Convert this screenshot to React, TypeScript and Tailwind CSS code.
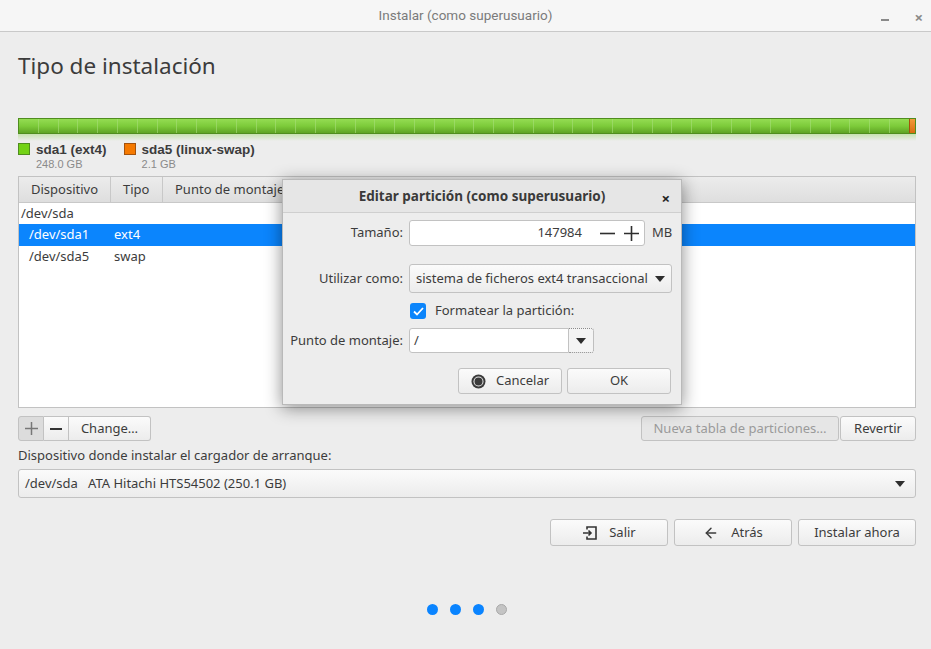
import React from 'react';
import { ArrowLeft } from 'lucide-react';

const SEGMENTS = Array.from({ length: 45 });

const btn =
  'flex items-center justify-center rounded-[3px] border border-[#c2c2c2] bg-gradient-to-b from-[#fbfbfb] to-[#ececec] text-[#3c3c3c]';

function Caret() {
  return (
    <svg width="10" height="6" viewBox="0 0 10 6">
      <path d="M0 0h10L5 6z" fill="#2e2e2e" />
    </svg>
  );
}

function Dialog() {
  return (
    <div className="absolute left-[282px] top-[179px] w-[400px] h-[226px] bg-[#ededed] border border-[#b9b9b9] shadow-[0_3px_16px_rgba(0,0,0,0.45)]">
      {/* header */}
      <div className="relative flex h-[33px] items-center justify-center border-b border-[#cfcfcf] bg-[#e6e6e6]">
        <span className="font-bold text-[13.5px] text-[#3a3a3a]">Editar partición (como superusuario)</span>
        <span className="absolute right-[11px] top-[7px] text-[15px] font-bold text-[#222]">×</span>
      </div>

      <div className="flex flex-col">
        {/* Tamaño */}
        <div className="mt-[7px] flex h-[26px] items-center">
          <div className="w-[126px] pr-[6px] text-right">Tamaño:</div>
          <div className="flex h-[26px] w-[236px] items-center rounded-[3px] border border-[#c2c2c2] bg-white">
            <span className="flex-1 pr-[13px] text-right">147984</span>
            <span className="flex w-[24px] justify-center">
              <svg width="15" height="15" viewBox="0 0 15 15"><path d="M0 7.5h15" stroke="#2e2e2e" strokeWidth="1.6" /></svg>
            </span>
            <span className="mr-[1px] flex w-[24px] justify-center">
              <svg width="15" height="15" viewBox="0 0 15 15"><path d="M0 7.5h15M7.5 0v15" stroke="#2e2e2e" strokeWidth="1.6" /></svg>
            </span>
          </div>
          <span className="ml-[7px]">MB</span>
        </div>

        {/* Utilizar como */}
        <div className="mt-[18px] flex h-[29px] items-center">
          <div className="w-[126px] pr-[6px] text-right">Utilizar como:</div>
          <div className={btn + ' h-[29px] w-[263px] !justify-between px-[6px]'}>
            <span>sistema de ficheros ext4 transaccional</span>
            <Caret />
          </div>
        </div>

        {/* checkbox */}
        <div className="mt-[10px] flex h-[16px] items-center pl-[127px]">
          <div className="flex h-[16px] w-[16px] items-center justify-center rounded-[3px] bg-[#0c85fb]">
            <svg width="11" height="9" viewBox="0 0 11 9">
              <path d="M1 4.5l3 3L10 1" stroke="white" strokeWidth="1.8" fill="none" />
            </svg>
          </div>
          <span className="ml-[9px]">Formatear la partición:</span>
        </div>

        {/* Punto de montaje */}
        <div className="mt-[9px] flex h-[25px] items-center">
          <div className="w-[126px] pr-[6px] text-right">Punto de montaje:</div>
          <div className="flex h-[25px] w-[160px] items-center rounded-l-[3px] border border-[#c2c2c2] bg-white pl-[4px]">/</div>
          <div className="flex h-[25px] w-[25px] items-center justify-center rounded-r-[3px] border border-l-0 border-dotted border-[#8a8a8a] bg-[#f4f4f4]">
            <Caret />
          </div>
        </div>

        {/* Buttons */}
        <div className="mt-[15px] flex justify-end gap-[5px] pr-[10px]">
          <div className={btn + ' h-[26px] w-[104px] gap-[10px]'}>
            <svg width="15" height="15" viewBox="0 0 15 15">
              <circle cx="7.5" cy="7.5" r="7" fill="#3a3a3a" />
              <circle cx="7.5" cy="7.5" r="5" fill="#e8e8e8" />
              <circle cx="7.5" cy="7.5" r="4" fill="#3a3a3a" />
            </svg>
            <span>Cancelar</span>
          </div>
          <div className={btn + ' h-[26px] w-[104px]'}>OK</div>
        </div>
      </div>
    </div>
  );
}

export default function App() {
  return (
    <div className="relative h-[649px] w-[931px] overflow-hidden bg-[#ededed] font-['Noto_Sans',sans-serif] text-[13px] text-[#3c3c3c]">
      {/* title bar */}
      <div className="relative flex h-[32px] items-center justify-center border-b border-[#c9c9c9] bg-[#f6f6f6]">
        <span className="font-['Liberation_Sans_Narrow','Roboto',sans-serif] text-[13.5px] text-[#7b7b7b]">Instalar (como superusuario)</span>
        <span className="absolute right-[42px] top-[19px] h-[2px] w-[8px] bg-[#8a8a8a]" />
        <span className="absolute right-[8px] top-[6px] text-[15px] font-bold text-[#8a8a8a]">×</span>
      </div>

      <div className="flex flex-col pl-[18px] pr-[15px]">
        <h1 className="mt-[19px] text-[22.5px] leading-[30px] text-[#3c3c3c]">Tipo de instalación</h1>

        {/* partition bar */}
        <div className="mt-[37px] flex h-[16px] border border-[#4f8d1e]">
          <div className="flex flex-1 bg-gradient-to-b from-[#94dc52] via-[#7dcb3a] to-[#5fa424]">
            {SEGMENTS.map((_, i) => (
              <div key={i} className="h-full flex-1 border-r border-[#a6dd79]/60 last:border-r-0" />
            ))}
          </div>
          <div className="w-[6px] border-l border-[#a4520c] bg-gradient-to-b from-[#f29a3a] to-[#d86d0c]" />
        </div>
        <div className="h-[7px] bg-gradient-to-b from-[#b6dc95] to-transparent opacity-70" />

        {/* legend */}
        <div className="mt-[2px] flex gap-[17px] font-['Liberation_Sans',sans-serif]">
          <div className="flex gap-[6px]">
            <div className="h-[12px] w-[12px] border border-[#4f8d1e] bg-[#73d216]" />
            <div className="flex flex-col">
              <span className="text-[13.5px] font-bold leading-[14px]">sda1 (ext4)</span>
              <span className="text-[11px] leading-[14px] text-[#8a8a8a]">248.0 GB</span>
            </div>
          </div>
          <div className="flex gap-[6px]">
            <div className="h-[12px] w-[12px] border border-[#a4520c] bg-[#f57900]" />
            <div className="flex flex-col">
              <span className="text-[13.5px] font-bold leading-[14px]">sda5 (linux-swap)</span>
              <span className="text-[11px] leading-[14px] text-[#8a8a8a]">2.1 GB</span>
            </div>
          </div>
        </div>

        {/* table */}
        <div className="mt-[5px] flex h-[232px] flex-col border border-[#c2c2c2] bg-white">
          <div className="flex h-[26px] items-center border-b border-[#c8c8c8] bg-gradient-to-b from-[#ececec] to-[#dedede]">
            <div className="flex h-full w-[92px] items-center border-r border-[#c8c8c8] pl-[12px]">Dispositivo</div>
            <div className="flex h-full w-[52px] items-center border-r border-[#c8c8c8] pl-[12px]">Tipo</div>
            <div className="flex h-full items-center pl-[12px]">Punto de montaje</div>
          </div>
          <div className="flex h-[21px] items-center pl-[2px]">/dev/sda</div>
          <div className="flex h-[22px] items-center bg-[#0b85fd] text-white">
            <span className="w-[95px] pl-[10px]">/dev/sda1</span>
            <span>ext4</span>
          </div>
          <div className="flex h-[22px] items-center">
            <span className="w-[95px] pl-[10px]">/dev/sda5</span>
            <span>swap</span>
          </div>
        </div>

        {/* table buttons */}
        <div className="mt-[8px] flex h-[25px] items-center">
          <div className={btn + ' h-[25px] w-[26px] rounded-r-none !bg-none !bg-[#dcdcdc] text-[#777]'}>
            <svg width="13" height="13" viewBox="0 0 13 13"><path d="M6.5 0v13M0 6.5h13" stroke="#777" strokeWidth="1.5" /></svg>
          </div>
          <div className={btn + ' h-[25px] w-[25px] rounded-none border-l-0'}>
            <svg width="12" height="2" viewBox="0 0 12 2"><path d="M0 1h12" stroke="#333" strokeWidth="2" /></svg>
          </div>
          <div className={btn + ' h-[25px] w-[82px] rounded-l-none border-l-0'}>Change…</div>
          <div className="flex-1" />
          <div className={btn + ' h-[25px] w-[198px] text-[#9a9a9a] !bg-none !bg-[#e6e6e6]'}>Nueva tabla de particiones…</div>
          <div className={btn + ' ml-[1px] h-[25px] w-[76px]'}>Revertir</div>
        </div>

        <div className="leading-[28px]">Dispositivo donde instalar el cargador de arranque:</div>

        <div className={btn + ' h-[29px] !justify-between pl-[6px] pr-[10px]'}>
          <span>/dev/sda&nbsp;&nbsp;&nbsp;ATA Hitachi HTS54502 (250.1 GB)</span>
          <Caret />
        </div>

        {/* navigation buttons */}
        <div className="mt-[21px] flex justify-end gap-[6px]">
          <div className={btn + ' h-[27px] w-[118px] gap-[12px]'}>
            <svg width="15" height="14" viewBox="0 0 15 14" fill="none" stroke="#333" strokeWidth="1.6">
              <path d="M5 3.5V1h9v12H5v-2.5" />
              <path d="M1 7h8M6.5 4.5L9 7l-2.5 2.5" />
            </svg>
            <span>Salir</span>
          </div>
          <div className={btn + ' h-[27px] w-[118px] gap-[12px]'}>
            <ArrowLeft size={16} strokeWidth={2.2} />
            <span>Atrás</span>
          </div>
          <div className={btn + ' h-[27px] w-[118px]'}>Instalar ahora</div>
        </div>

        {/* progress dots */}
        <div className="mt-[58px] flex justify-center gap-[12px]">
          <span className="h-[11px] w-[11px] rounded-full bg-[#0a84ff]" />
          <span className="h-[11px] w-[11px] rounded-full bg-[#0a84ff]" />
          <span className="h-[11px] w-[11px] rounded-full bg-[#0a84ff]" />
          <span className="h-[11px] w-[11px] rounded-full border border-[#a9a9a9] bg-[#c4c4c4]" />
        </div>
      </div>

      <Dialog />
    </div>
  );
}
